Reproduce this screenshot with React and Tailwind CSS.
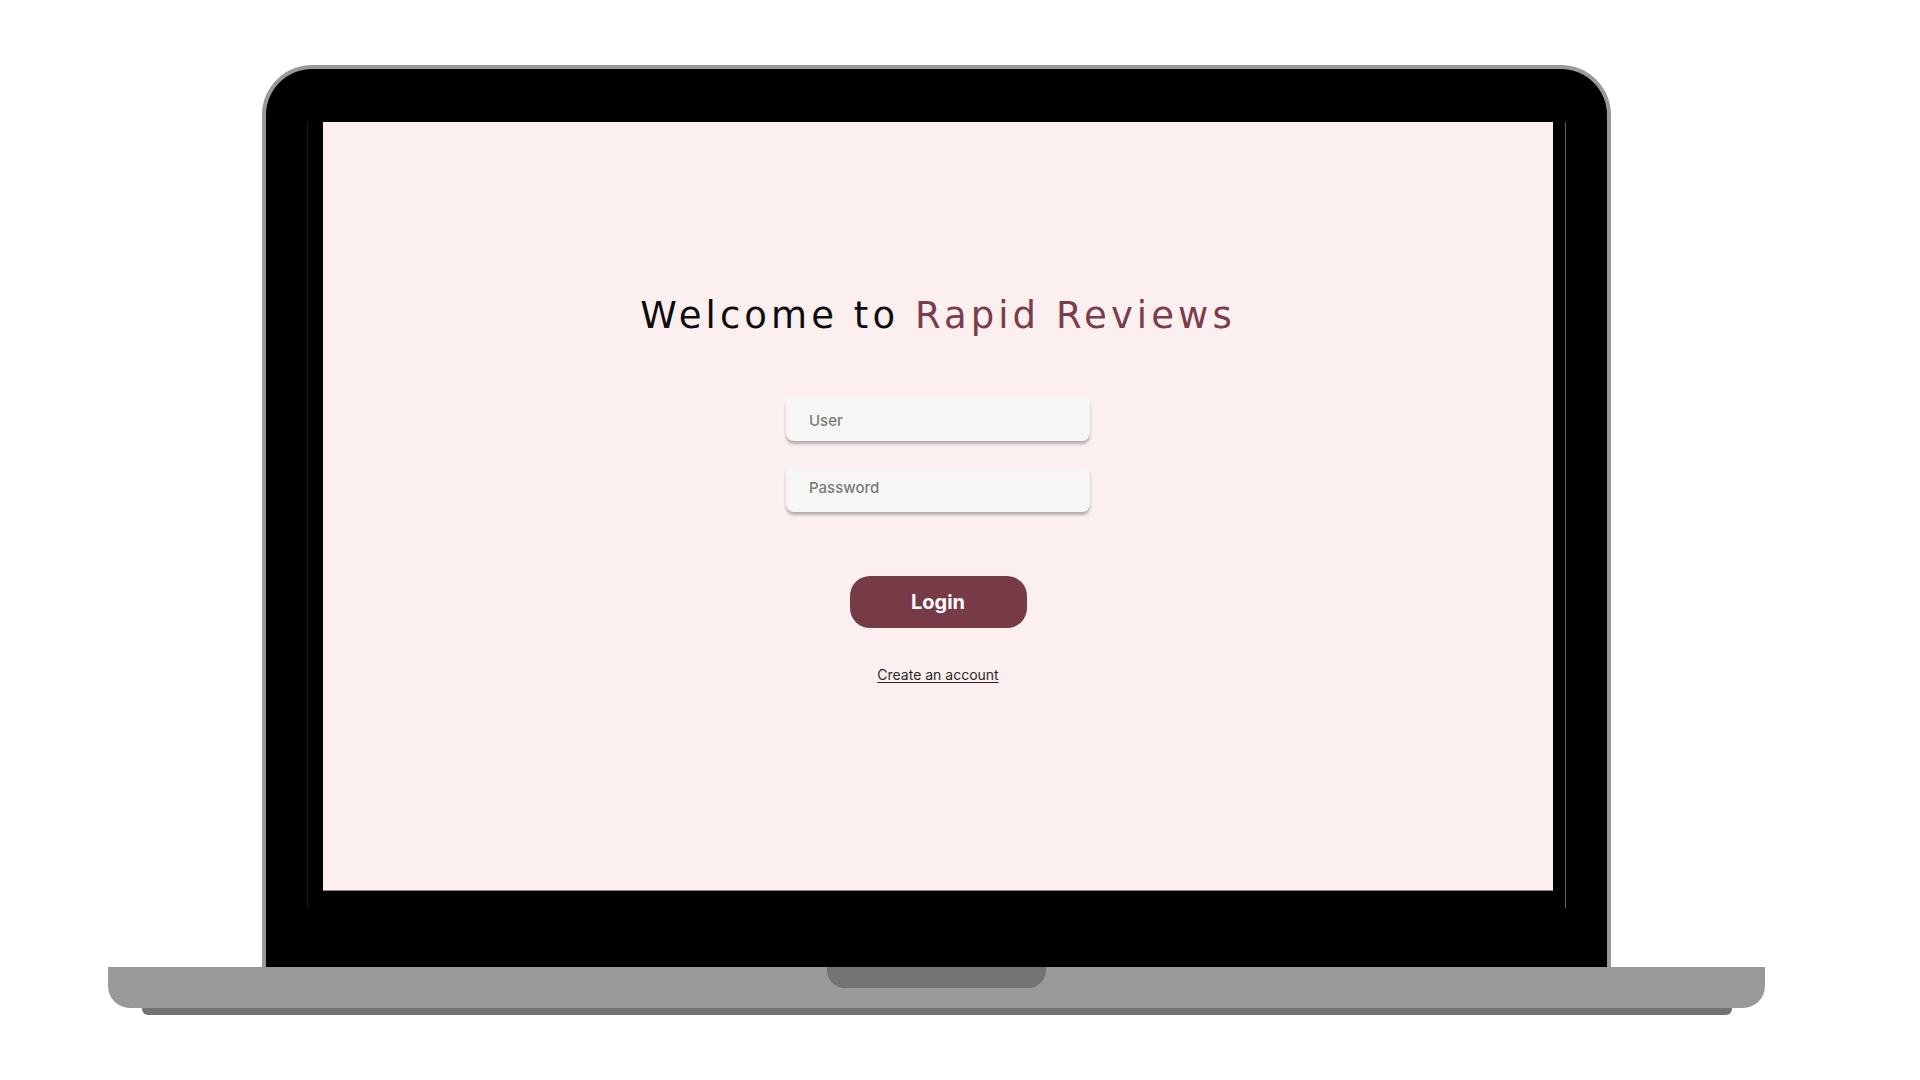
export default function App() {
  return (
    <div className="min-h-screen w-full bg-white font-['Inter',sans-serif]">
      <div className="flex w-[1657px] ml-[108px] pt-[65px] flex-col items-center">
        {/* Lid */}
        <div className="w-[1349px] h-[902px] bg-black rounded-t-[50px] border-[4px] border-b-0 border-[#999999] pt-[53px] px-[41px]">
          <div className="h-[786px] border-l border-l-[#1c1c1c] border-r border-r-[#5e5e5e] pl-[15px] pr-[11px]">
            <LoginScreen />
          </div>
        </div>

        {/* Base */}
        <div className="w-[1657px] h-[41px] bg-[#999999] rounded-b-[22px] flex justify-center">
          <div className="w-[219px] h-[21px] bg-[#737373] rounded-b-[18px]" />
        </div>
        <div className="w-[1590px] h-[7px] bg-[#737373] rounded-b-[6px]" />
      </div>
    </div>
  )
}

function LoginScreen() {
  return (
    <div className="w-[1230px] h-[769px] bg-[#fbf0ef] border-b border-[#8a8a8a] flex flex-col items-center pt-[175px]">
      <h1 className="font-['DejaVu_Sans',sans-serif] text-[37px] leading-none tracking-[0.11em] text-[#0d0d0d] font-normal">
        Welcome to <span className="text-[#7b3c4b]">Rapid Reviews</span>
      </h1>

      <div className="mt-[62px] flex flex-col gap-[25px]">
        <input
          type="text"
          placeholder="User"
          className="w-[304px] h-[45px] rounded-[8px] bg-[#f8f6f5] px-[23px] pt-[3px] text-[15px] font-medium text-[#333] placeholder:text-[#7a7a7a] shadow-[0_3px_3px_rgba(0,0,0,0.28)] outline-none"
        />
        <input
          type="password"
          placeholder="Password"
          className="w-[304px] h-[46px] rounded-[8px] bg-[#f8f6f5] px-[23px] pb-[4px] text-[15px] font-medium text-[#333] placeholder:text-[#7a7a7a] shadow-[0_3px_3px_rgba(0,0,0,0.28)] outline-none"
        />
      </div>

      <button className="mt-[64px] w-[177px] h-[52px] rounded-[20px] bg-[#773a47] text-white text-[20px] font-bold">
        Login
      </button>

      <a href="#" className="mt-[38px] text-[14px] leading-[17px] text-[#2a2a2a] underline underline-offset-2">
        Create an account
      </a>
    </div>
  )
}
